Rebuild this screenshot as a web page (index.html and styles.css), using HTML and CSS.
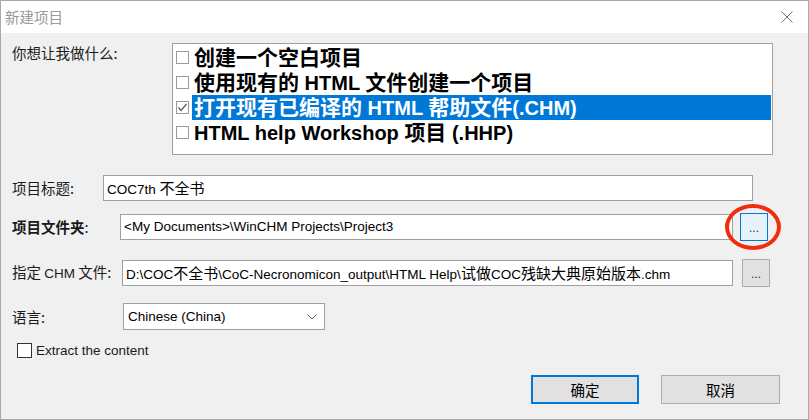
FILE: index.html
```html
<!DOCTYPE html>
<html lang="zh-CN">
<head>
<meta charset="utf-8">
<title>新建项目</title>
<link rel="stylesheet" href="styles.css">
</head>
<body>
<div class="window">
  <div class="titlebar">
    <span class="title">新建项目</span>
    <svg class="close" width="12" height="12" viewBox="0 0 12 12"><path d="M0.5 0.5 L11.5 11.5 M11.5 0.5 L0.5 11.5" stroke="#6d6d6d" stroke-width="1" fill="none"/></svg>
  </div>
  <div class="content">
    <div class="row row-task">
      <div class="label label-task">你想让我做什么:</div>
      <div class="listbox">
        <div class="item"><span class="cb"></span><span class="item-text"><span class="ck">创建一个空白项目</span></span></div>
        <div class="item"><span class="cb"></span><span class="item-text"><span class="ck">使用现有的</span> HTML <span class="ck">文件创建一个项目</span></span></div>
        <div class="item"><span class="cb"><svg width="11" height="11" viewBox="0 0 11 11"><path d="M1.5 5.5 L4 8.5 L9.5 2" stroke="#5a5a5a" stroke-width="1.2" fill="none"/></svg></span><span class="item-text selected"><span class="ck">打开现有已编译的</span> HTML <span class="ck">帮助文件</span>(.CHM)</span></div>
        <div class="item"><span class="cb"></span><span class="item-text">HTML help Workshop <span class="ck">项目</span> (.HHP)</span></div>
      </div>
    </div>

    <div class="row row-title">
      <div class="label label-title">项目标题:</div>
      <div class="input input-title">COC7th <span class="cjk">不全书</span></div>
    </div>

    <div class="row row-folder">
      <div class="label label-folder"><b>项目文件夹</b>:</div>
      <div class="input input-folder">&lt;My Documents&gt;\WinCHM Projects\Project3</div>
      <div class="browse-wrap">
        <div class="browse browse-active">...</div>
        <div class="highlight-ring"></div>
      </div>
    </div>

    <div class="row row-chm">
      <div class="label label-chm">指定 <span class="lat">CHM</span> 文件:</div>
      <div class="input input-chm">D:\COC<span class="cjk">不全书</span>\CoC-Necronomicon_output\HTML Help\<span class="cjk">试做</span>COC<span class="cjk">残缺大典原始版本</span>.chm</div>
      <div class="browse browse-chm">...</div>
    </div>

    <div class="row row-lang">
      <div class="label label-lang">语言:</div>
      <div class="select">
        <span class="sel-text">Chinese (China)</span>
        <svg class="chevron" width="10" height="6" viewBox="0 0 10 6"><path d="M0.5 0.5 L5 5 L9.5 0.5" stroke="#555" stroke-width="1" fill="none"/></svg>
      </div>
    </div>

    <div class="row row-extract">
      <span class="checkbox"></span>
      <span class="extract-text">Extract the content</span>
    </div>

    <div class="row row-buttons">
      <div class="btn btn-default">确定</div>
      <div class="btn btn-cancel">取消</div>
    </div>
  </div>
</div>
</body>
</html>
```
FILE: styles.css
```css
* { box-sizing: border-box; }
html, body { margin: 0; padding: 0; }
body {
  width: 809px;
  height: 420px;
  overflow: hidden;
  background: #ffffff;
  font-family: "Liberation Sans", "Noto Sans CJK SC", sans-serif;
  font-size: 13px;
  color: #000;
}
.window {
  width: 809px;
  height: 420px;
  border: 1px solid #a9a9a9;
  background: #f0f0f0;
  display: flex;
  flex-direction: column;
}
.titlebar {
  height: 32px;
  background: #ffffff;
  display: flex;
  align-items: center;
  justify-content: space-between;
  padding: 0 15px 0 4px;
  flex-shrink: 0;
}
.title {
  font-family: "Noto Sans CJK SC", sans-serif;
  font-size: 14.5px;
  color: #9a9a9a;
  margin-top: -1px;
}
.close { display: block; margin-top: -1px; }
.content {
  flex: 1;
  padding-left: 11px;
  display: flex;
  flex-direction: column;
}
.row { display: flex; align-items: center; }
.label {
  font-family: "Noto Sans CJK SC", sans-serif;
  font-size: 14.5px;
  color: #1a1a1a;
  flex-shrink: 0;
  line-height: 18px;
}
.label b { font-weight: 700; }
.lat { font-family: "Liberation Sans", sans-serif; font-size: 13.5px; }
.cjk { font-family: "Noto Sans CJK SC", sans-serif; font-size: 15px; }

/* task list */
.row-task { margin-top: 10px; align-items: flex-start; }
.label-task { width: 160px; margin-top: 1px; }
.listbox {
  width: 601px;
  height: 112px;
  background: #fff;
  border: 1px solid #a0a0a0;
  padding: 1px 1px 0 3px;
}
.item { display: flex; align-items: center; height: 25px; }
.cb {
  width: 13px;
  height: 13px;
  border: 1px solid #9a9a9a;
  background: #fff;
  margin-right: 3px;
  flex-shrink: 0;
  display: flex;
  align-items: center;
  justify-content: center;
}
.cb svg { display: block; }
.item-text {
  flex: 1;
  height: 25px;
  line-height: 25px;
  padding-left: 2px;
  font-family: "Liberation Sans", "Noto Sans CJK SC", sans-serif;
  font-weight: 700;
  font-size: 20px;
  color: #000;
  white-space: nowrap;
}
.item-text .ck {
  font-family: "Liberation Sans", "Noto Sans CJK SC", sans-serif;
  font-size: 21px;
}
.item-text.selected { background: #0078d7; color: #fff; }

/* inputs */
.input {
  height: 26px;
  line-height: 24px;
  background: #fff;
  border: 1px solid #a0a0a0;
  padding-left: 3px;
  white-space: nowrap;
  overflow: hidden;
  color: #000;
  font-family: "Liberation Sans", sans-serif;
  font-size: 13.5px;
}
.row-title { margin-top: 20px; }
.label-title { width: 91px; }
.input-title { width: 650px; }

.row-folder { margin-top: 12px; height: 28px; }
.label-folder { width: 108px; }
.input-folder { width: 613px; }
.browse-wrap { position: relative; margin-left: 7px; }
.browse {
  width: 28px;
  height: 28px;
  background: #e1e1e1;
  border: 1px solid #adadad;
  display: flex;
  align-items: flex-end;
  justify-content: center;
  padding-bottom: 6px;
  font-size: 12px;
  line-height: 12px;
  color: #333;
  font-family: "Liberation Sans", sans-serif;
}
.browse-active { background: #e5f1fb; border-color: #0078d7; }
.highlight-ring {
  position: absolute;
  left: -15px;
  top: -9px;
  width: 56px;
  height: 46px;
  border: 4px solid #f22d0e;
  border-radius: 50%;
}

.row-chm { margin-top: 18px; height: 28px; }
.label-chm { width: 110px; }
.input-chm { width: 611px; }
.browse-chm { margin-left: 9px; }

.row-lang { margin-top: 16px; }
.label-lang { width: 111px; }
.select {
  width: 202px;
  height: 27px;
  background: #fff;
  border: 1px solid #a0a0a0;
  display: flex;
  align-items: center;
  justify-content: space-between;
  padding: 0 7px 0 4px;
}
.sel-text { font-family: "Liberation Sans", sans-serif; font-size: 13.5px; }
.chevron { display: block; }

.row-extract { margin-top: 13px; padding-left: 5px; }
.checkbox {
  width: 15px;
  height: 15px;
  border: 1px solid #333;
  background: #fff;
  margin-right: 4px;
}
.extract-text { font-size: 13.5px; color: #1a1a1a; }

.row-buttons {
  margin-top: 17px;
  justify-content: flex-end;
  padding-right: 28px;
  gap: 22px;
}
.btn {
  height: 29px;
  background: #e1e1e1;
  border: 1px solid #adadad;
  display: flex;
  align-items: center;
  justify-content: center;
  font-family: "Noto Sans CJK SC", sans-serif;
  font-size: 14.5px;
  color: #000;
}
.btn-default { width: 108px; border: 2px solid #0078d7; }
.btn-cancel { width: 119px; }
```
